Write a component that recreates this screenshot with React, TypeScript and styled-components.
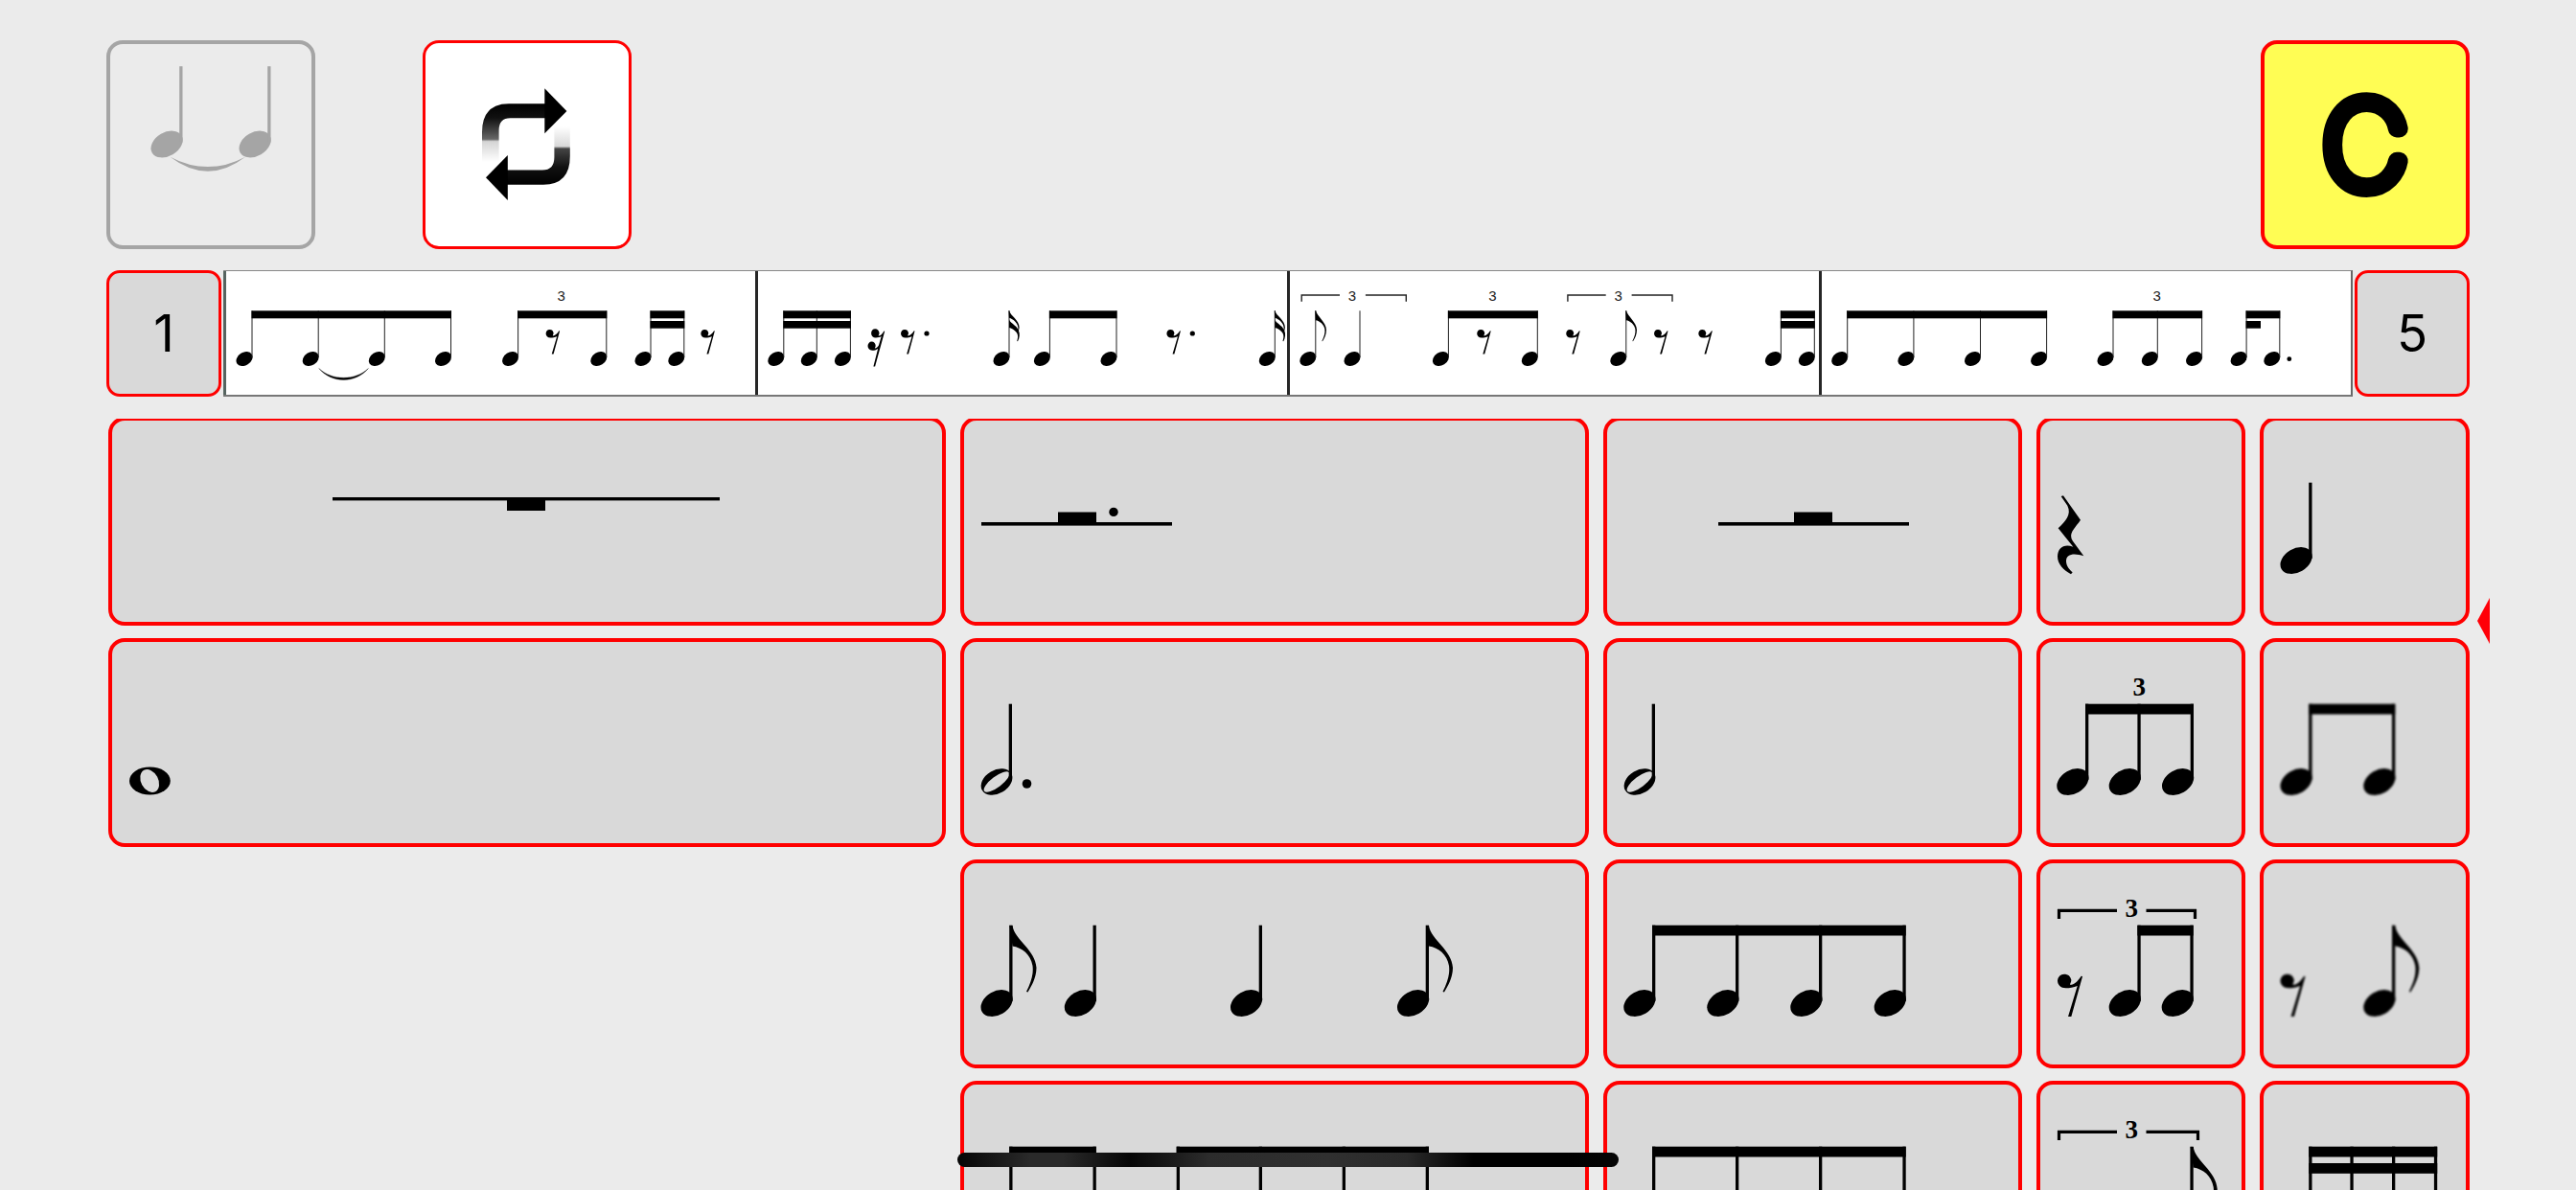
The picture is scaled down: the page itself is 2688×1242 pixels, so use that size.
import React from "react";
import styled, { createGlobalStyle } from "styled-components";

const Global = createGlobalStyle`
  *, *::before, *::after { box-sizing: border-box; }
  body { margin: 0; background: #ebebeb; overflow: hidden; }
  button { margin: 0; padding: 0; font: inherit; color: inherit; cursor: pointer; }
`;

const Page = styled.main`
  display: flex;
  flex-direction: column;
  height: 100vh;
  padding: 42px 111px 0;
  background: #ebebeb;
  color: #000;
  font-family: Inter, "Liberation Sans", sans-serif;
`;

const Toolbar = styled.header`
  display: flex;
  gap: 112px;
  margin-bottom: 22px;
`;

const Tool = styled.button<{ $fill: string; $line: string; $thick?: boolean; $end?: boolean }>`
  width: 218px;
  height: 218px;
  margin-left: ${(p) => (p.$end ? "auto" : "0")};
  overflow: hidden;
  background: ${(p) => p.$fill};
  border: ${(p) => (p.$thick ? 4 : 3)}px solid ${(p) => p.$line};
  border-radius: 17px;
`;

const ScoreRow = styled.section`
  display: flex;
  gap: 2px;
  height: 132px;
  margin-bottom: 23px;
`;

const BarButton = styled.button`
  flex: 0 0 120px;
  background: #d9d9d9;
  border: 3px solid #f00;
  border-radius: 14px;
  font-size: 53px;
  line-height: 60px;
`;

const Score = styled.div`
  display: flex;
  flex: 1;
  min-width: 0;
  background: #fff;
  border-top: 1px solid #888;
  border-bottom: 2px solid #777;
  border-right: 2px solid #666;
`;

const Measure = styled.div`
  flex: 1;
  min-width: 0;
  border-left: 3px solid #262626;
  &:first-child { border-left-color: #566460; }
`;

const Drawing = styled.svg`
  display: block;
  width: 100%;
  height: 100%;
`;

const PaletteArea = styled.section`
  position: relative;
  flex: 1;
  min-height: 0;
`;

const Scroller = styled.div`
  height: 100%;
  padding-left: 2px;
  overflow: hidden;
`;

const Grid = styled.div`
  display: grid;
  grid-template-columns: 4fr 3fr 2fr 1fr 1fr;
  grid-auto-rows: 218px;
  gap: 13px 15px;
  margin-top: -2px;
`;

const Cell = styled.button<{ $col: number }>`
  grid-column: ${(p) => p.$col};
  min-width: 0;
  overflow: hidden;
  background: #d9d9d9;
  border: 4px solid #f00;
  border-radius: 17px;
`;

const Marker = styled.svg`
  position: absolute;
  top: 187px;
  right: -21px;
  width: 13px;
  height: 48px;
`;

const HomeBar = styled.div`
  position: fixed;
  bottom: 24px;
  left: 50%;
  width: 690px;
  height: 15px;
  margin-left: -345px;
  border-radius: 8px;
  background: linear-gradient(
    90deg, #050505 0%, #2a2a2a 11%, #2a2a2a 16%, #060606 26%, #2c2c2c 38%,
    #303030 56%, #2a2a2a 68%, #000 78%, #000 92%, #050505 100%
  );
`;

/* ---------- large notation, used on the buttons ---------- */

const HEAD_Y = 150;

const Stem = ({ x, top = 68.7, to = 148 }: { x: number; top?: number; to?: number }) => (
  <rect x={x - 3.3} y={top} width={3.3} height={to - top} />
);

const Note = ({ x }: { x: number }) => (
  <>
    <ellipse cx={x - 16.4} cy={HEAD_Y} rx={17.8} ry={12.3} transform={`rotate(-30 ${x - 16.4} ${HEAD_Y})`} />
    <Stem x={x} />
  </>
);

const Flag = ({ x }: { x: number }) => (
  <path
    transform={`translate(${x} 69)`}
    d="M-3 0H0C2 15 24 25 25 44C25 54 20 63 16 69.5L14.5 69C20 58 22 50 21 42C19 30 10 23 0 21.5Z"
  />
);

const Half = ({ x }: { x: number }) => (
  <>
    <ellipse cx={x - 16} cy={HEAD_Y} rx={17.5} ry={12.2} transform={`rotate(-30 ${x - 16} ${HEAD_Y})`} />
    <ellipse cx={x - 16} cy={HEAD_Y} rx={16.2} ry={5.6} transform={`rotate(-37 ${x - 16} ${HEAD_Y})`} fill="#d9d9d9" />
    <Stem x={x} />
  </>
);

const Beam = ({ from, to, y = 68.7 }: { from: number; to: number; y?: number }) => (
  <rect x={from - 3.3} y={y} width={to - from + 3.3} height={10.8} />
);

const REST =
  "M0 24A22 24 0 0 1 43 22C43 30 38 34 39 37C50 38 62 28 74 10L78 11L43 137L33 137L62 41C50 46 38 48 26 48C10 48 0 38 0 24Z";

const Rest8 = ({ x }: { x: number }) => (
  <path d={REST} transform={`translate(${x} 118.3) scale(.334)`} />
);

const Three = ({ x }: { x: number }) => (
  <text x={x} y={60} textAnchor="middle" fontFamily='"Liberation Serif", serif' fontWeight={700} fontSize={27}>
    3
  </text>
);

const Bracket = ({ to }: { to: number }) => (
  <>
    <path d={`M23.5 62V53.3H84M114.5 53.3H${to - 1.5}V62`} fill="none" stroke="#000" strokeWidth={3.2} />
    <Three x={99.3} />
  </>
);

const Group = ({ stems, beams = [] }: { stems: number[]; beams?: [number, number][] }) => (
  <>
    {stems.map((x) => <Note key={x} x={x} />)}
    {beams.map(([a, b]) => <Beam key={a} from={a} to={b} />)}
  </>
);

/* ---------- small notation, used in the measures ---------- */

const SmallNote = ({ x }: { x: number }) => (
  <>
    <ellipse cx={x - 8} cy={92.6} rx={9.1} ry={6.8} transform={`rotate(-32 ${x - 8} 92.6)`} />
    <rect x={x - 0.5} y={42.3} width={1} height={49} fill="#222" />
  </>
);

const Notes = ({ at, beam, second }: { at: number[]; beam?: boolean; second?: number }) => (
  <>
    {at.map((x) => <SmallNote key={x} x={x} />)}
    {beam && <rect x={at[0] - 0.5} y={42.3} width={at[at.length - 1] - at[0] + 1} height={8} />}
    {second && <rect x={at[0] - 0.5} y={53} width={second - at[0] + 1} height={7.7} />}
  </>
);

const SmallRest = ({ x }: { x: number }) => (
  <path d={REST} transform={`translate(${x} 61.3) scale(.186 .191)`} />
);

const SmallRest16 = ({ x }: { x: number }) => (
  <path
    transform={`translate(${x} 61.3)`}
    d="M3.6 4.6A4.2 4.6 0 0 1 12 4.4C12 5.8 11 6.4 11.2 7.3C13.2 7.3 15.3 5.3 16.9 2.2L17.7 2.4L7.6 39.3H5.9L10.6 20.6C8.8 22 6.8 22.4 4.6 22.4C1.8 22.3 0 20.5 0 17.8A4.1 4.5 0 0 1 8.2 17.7C8.2 19 7.2 19.5 7.4 20.3C9 20.2 10.6 18.8 11.5 17L14.2 7.8C12.5 8.9 10.8 9.2 8.4 9.2C5.6 9.1 3.6 7.3 3.6 4.6Z"
  />
);

const SmallFlag = ({ x }: { x: number }) => (
  <path
    transform={`translate(${x} 42.3)`}
    d="M-.5 0H.3C1.5 6 11 12 11.2 20C11.2 25 9.2 29 7.2 32L6.6 31.6C9 27 10 23 9.6 19.5C9 14.5 4 10.5 0 10Z"
  />
);

const SmallFlags16 = ({ x }: { x: number }) => (
  <path
    transform={`translate(${x} 42.3)`}
    d="M-.5 0H.3C1 5.5 10.8 9.5 10.6 17.5L10 21C11.4 24 11 28.5 9 32L8.2 31.6C9.8 27 9 24.5 7.5 22.5C5.5 19.5 2 18 0 17.6V9.5C2 13.5 7.6 15.5 9.4 19.6C10 13 4 8.5 0 7.5Z"
  />
);

const SmallThree = ({ x }: { x: number }) => (
  <text x={x} y={32} textAnchor="middle" fontFamily='"Liberation Sans", sans-serif' fontSize={15} fill="#222">
    3
  </text>
);

const SmallBracket = ({ x }: { x: number }) => (
  <>
    <path
      d={`M${x + 0.7} 32.7V26H${x + 40.5}M${x + 67.4} 26H${x + 109.8}V32.7`}
      fill="none"
      stroke="#222"
      strokeWidth={1.4}
    />
    <SmallThree x={x + 53.5} />
  </>
);

const measures: React.ReactNode[] = [
  <>
    <Notes at={[30, 99.2, 168.3, 237.5]} beam />
    <path d="M99.8 102.5C113 118.5 138 118.5 151.4 102.5C138 115.5 113 115.5 99.8 102.5Z" stroke="#222" strokeWidth={0.4} />
    <Notes at={[307.6, 399.8]} beam />
    <SmallThree x={352.7} />
    <SmallRest x={336.6} />
    <Notes at={[446, 480.8]} beam second={480.8} />
    <SmallRest x={498.3} />
  </>,
  <>
    <Notes at={[29.8, 64.3, 99.4]} beam second={99.4} />
    <SmallRest16 x={117.5} />
    <SmallRest x={152} />
    <circle cx={179} cy={66} r={2.6} />
    <Notes at={[265]} />
    <SmallFlags16 x={265} />
    <Notes at={[307.4, 377]} beam />
    <SmallRest x={429.4} />
    <circle cx={456.3} cy={66} r={2.6} />
    <Notes at={[542.3]} />
    <SmallFlags16 x={542.3} />
  </>,
  <>
    <SmallBracket x={14.5} />
    <Notes at={[29.8, 76]} />
    <SmallFlag x={29.8} />
    <Notes at={[168.4, 261.3]} beam />
    <SmallThree x={214.3} />
    <SmallRest x={198.2} />
    <SmallBracket x={292.2} />
    <SmallRest x={291.2} />
    <Notes at={[353.8]} />
    <SmallFlag x={353.8} />
    <SmallRest x={383} />
    <SmallRest x={429.3} />
    <Notes at={[515.4, 550.3]} beam second={550.3} />
  </>,
  <>
    <Notes at={[29.7, 98.9, 168.5, 237.6]} beam />
    <Notes at={[307, 353.3, 399.6]} beam />
    <SmallThree x={352.6} />
    <Notes at={[446.1, 480.8]} beam second={460.5} />
    <circle cx={490.8} cy={92.7} r={2.4} />
  </>,
];

/* ---------- palette ---------- */

type Item = { col: number; width: number; label: string; soft?: boolean; art: React.ReactNode };

const items: Item[] = [
  {
    col: 1, width: 874, label: "Whole rest",
    art: <><rect x={234} y={84} width={404} height={3.4} /><rect x={416} y={85} width={40} height={13} /></>,
  },
  {
    col: 2, width: 655, label: "Dotted half rest",
    art: <><rect x={22} y={110} width={199} height={3.6} /><rect x={102} y={99.5} width={40} height={12} /><circle cx={160} cy={99.4} r={4.7} /></>,
  },
  {
    col: 3, width: 437, label: "Half rest",
    art: <><rect x={120} y={110} width={199} height={3.6} /><rect x={199} y={99.5} width={40} height={12} /></>,
  },
  {
    col: 4, width: 218, label: "Quarter rest",
    art: (
      <path
        transform="translate(-25 -5) scale(.3333)"
        d="M152 264L159 262L213 338C198 360 180 375 184 393C185 399 188 403 191 407L223 451C195 441 167 443 168 468C169 483 178 493 188 502L183 508C160 494 141 477 141 452C142 425 161 412 190 422L143 364C165 342 186 322 172 293Z"
      />
    ),
  },
  { col: 5, width: 218, label: "Quarter note", art: <Note x={54.5} /> },

  {
    col: 1, width: 874, label: "Whole note",
    art: <><ellipse cx={43.4} cy={149} rx={21.4} ry={14.6} /><ellipse cx={43.2} cy={149} rx={12.6} ry={9} transform="rotate(62 43.2 149)" fill="#d9d9d9" /></>,
  },
  { col: 2, width: 655, label: "Dotted half note", art: <><Half x={54} /><circle cx={69.5} cy={152} r={4.8} /></> },
  { col: 3, width: 437, label: "Half note", art: <Half x={54} /> },
  {
    col: 4, width: 218, label: "Eighth triplet",
    art: <><Three x={107.3} /><Group stems={[54.3, 108.7, 164]} beams={[[54.3, 164]]} /></>,
  },
  { col: 5, width: 218, label: "Two eighths", soft: true, art: <Group stems={[54.5, 141.3]} beams={[[54.5, 141.3]]} /> },

  {
    col: 2, width: 655, label: "Syncopated quarters",
    art: <><Group stems={[54.5, 141.8, 315, 489]} /><Flag x={54.5} /><Flag x={489} /></>,
  },
  {
    col: 3, width: 437, label: "Four eighths",
    art: <Group stems={[54.3, 141.3, 228.3, 315.7]} beams={[[54.3, 315.7]]} />,
  },
  {
    col: 4, width: 218, label: "Triplet with rest first",
    art: <><Bracket to={167} /><Rest8 x={22} /><Group stems={[108.7, 163.7]} beams={[[108.7, 163.7]]} /></>,
  },
  {
    col: 5, width: 218, label: "Eighth rest and eighth", soft: true,
    art: <><Rest8 x={21.5} /><Group stems={[141.3]} /><Flag x={141.3} /></>,
  },

  {
    col: 2, width: 655, label: "Six eighths",
    art: <Group stems={[54.5, 141.8, 229, 315, 402, 489]} beams={[[54.5, 141.8], [229, 489]]} />,
  },
  {
    col: 3, width: 437, label: "Four eighths, tied",
    art: <Group stems={[54.3, 141.3, 228.3, 315.7]} beams={[[54.3, 315.7]]} />,
  },
  {
    col: 4, width: 218, label: "Triplet with eighth last",
    art: <><Bracket to={170} /><Group stems={[163.7]} /><Flag x={163.7} /></>,
  },
  {
    col: 5, width: 218, label: "Four sixteenths",
    art: <><Group stems={[54.5, 97.7, 141.3, 185.2]} beams={[[54.5, 185.2]]} /><Beam from={54.5} to={185.2} y={86} /></>,
  },
];

const TieIcon = () => (
  <Drawing viewBox="4 4 210 210" fill="#a5a5a5" aria-hidden="true">
    <g transform="translate(0 -41.5)">
      <Note x={79.5} />
      <Note x={171.5} />
    </g>
    <path d="M66.5 121.7Q106 151.7 145 121.7Q106 142.5 66.5 121.7Z" />
  </Drawing>
);

const RepeatIcon = () => (
  <Drawing viewBox="3 3 212 212" aria-hidden="true">
    <defs>
      <linearGradient id="upper" gradientUnits="userSpaceOnUse" x1="0" y1="66" x2="0" y2="127">
        <stop offset="0" stopColor="#000" />
        <stop offset=".25" stopColor="#111" />
        <stop offset=".61" stopColor="#666" />
        <stop offset=".65" stopColor="#d4d4d4" />
        <stop offset="1" stopColor="#fff" />
      </linearGradient>
      <linearGradient id="lower" gradientUnits="userSpaceOnUse" x1="0" y1="151" x2="0" y2="90">
        <stop offset="0" stopColor="#000" />
        <stop offset=".3" stopColor="#111" />
        <stop offset=".62" stopColor="#444" />
        <stop offset=".66" stopColor="#d8d8d8" />
        <stop offset="1" stopColor="#fff" />
      </linearGradient>
    </defs>
    <path fill="url(#upper)" d="M62 127V96Q62 66.3 90 66.3H128V81.3H91.5Q79.6 81.3 79.6 94V127Z" />
    <path d="M127.3 50.3L150.4 74L127.3 97.3Z" />
    <path fill="url(#lower)" d="M153.8 90V121Q153.8 150.7 126 150.7H88V135.5H125Q137.4 135.5 137.4 122V90Z" />
    <path d="M88.8 120L66 143.3L88.8 167Z" />
  </Drawing>
);

const KeyLetter = () => (
  <Drawing viewBox="4 4 210 210">
    <text
      x={109}
      y={154}
      textAnchor="middle"
      fontFamily='Inter, "Liberation Sans", sans-serif'
      fontWeight={100}
      fontSize={123}
      stroke="#000"
      strokeWidth={18}
      strokeLinejoin="round"
      strokeLinecap="round"
    >
      C
    </text>
  </Drawing>
);

export default function App() {
  return (
    <>
      <Global />
      <Page>
        <Toolbar>
          <Tool $fill="#ebebeb" $line="#a5a5a5" $thick aria-label="Tie notes">
            <TieIcon />
          </Tool>
          <Tool $fill="#fff" $line="#f00" aria-label="Repeat">
            <RepeatIcon />
          </Tool>
          <Tool $fill="#fffd54" $line="#f00" $thick $end>
            <KeyLetter />
          </Tool>
        </Toolbar>

        <ScoreRow>
          <BarButton>1</BarButton>
          <Score>
            {measures.map((art, i) => (
              <Measure key={i}>
                <Drawing viewBox="3 1 552 129">{art}</Drawing>
              </Measure>
            ))}
          </Score>
          <BarButton>5</BarButton>
        </ScoreRow>

        <PaletteArea>
          <Scroller>
            <Grid>
              {items.map((it) => (
                <Cell key={it.label} $col={it.col} aria-label={it.label}>
                  <Drawing
                    viewBox={`4 4 ${it.width - 8} 210`}
                    preserveAspectRatio="xMinYMin meet"
                  >
                    {it.soft && (
                      <filter id="soft">
                        <feGaussianBlur stdDeviation=".9" />
                      </filter>
                    )}
                    <g filter={it.soft ? "url(#soft)" : undefined}>{it.art}</g>
                  </Drawing>
                </Cell>
              ))}
            </Grid>
          </Scroller>
          <Marker viewBox="0 0 13 48" aria-hidden="true">
            <path d="M0 24L13 0V48Z" fill="#ff0008" />
          </Marker>
        </PaletteArea>
      </Page>
      <HomeBar />
    </>
  );
}
